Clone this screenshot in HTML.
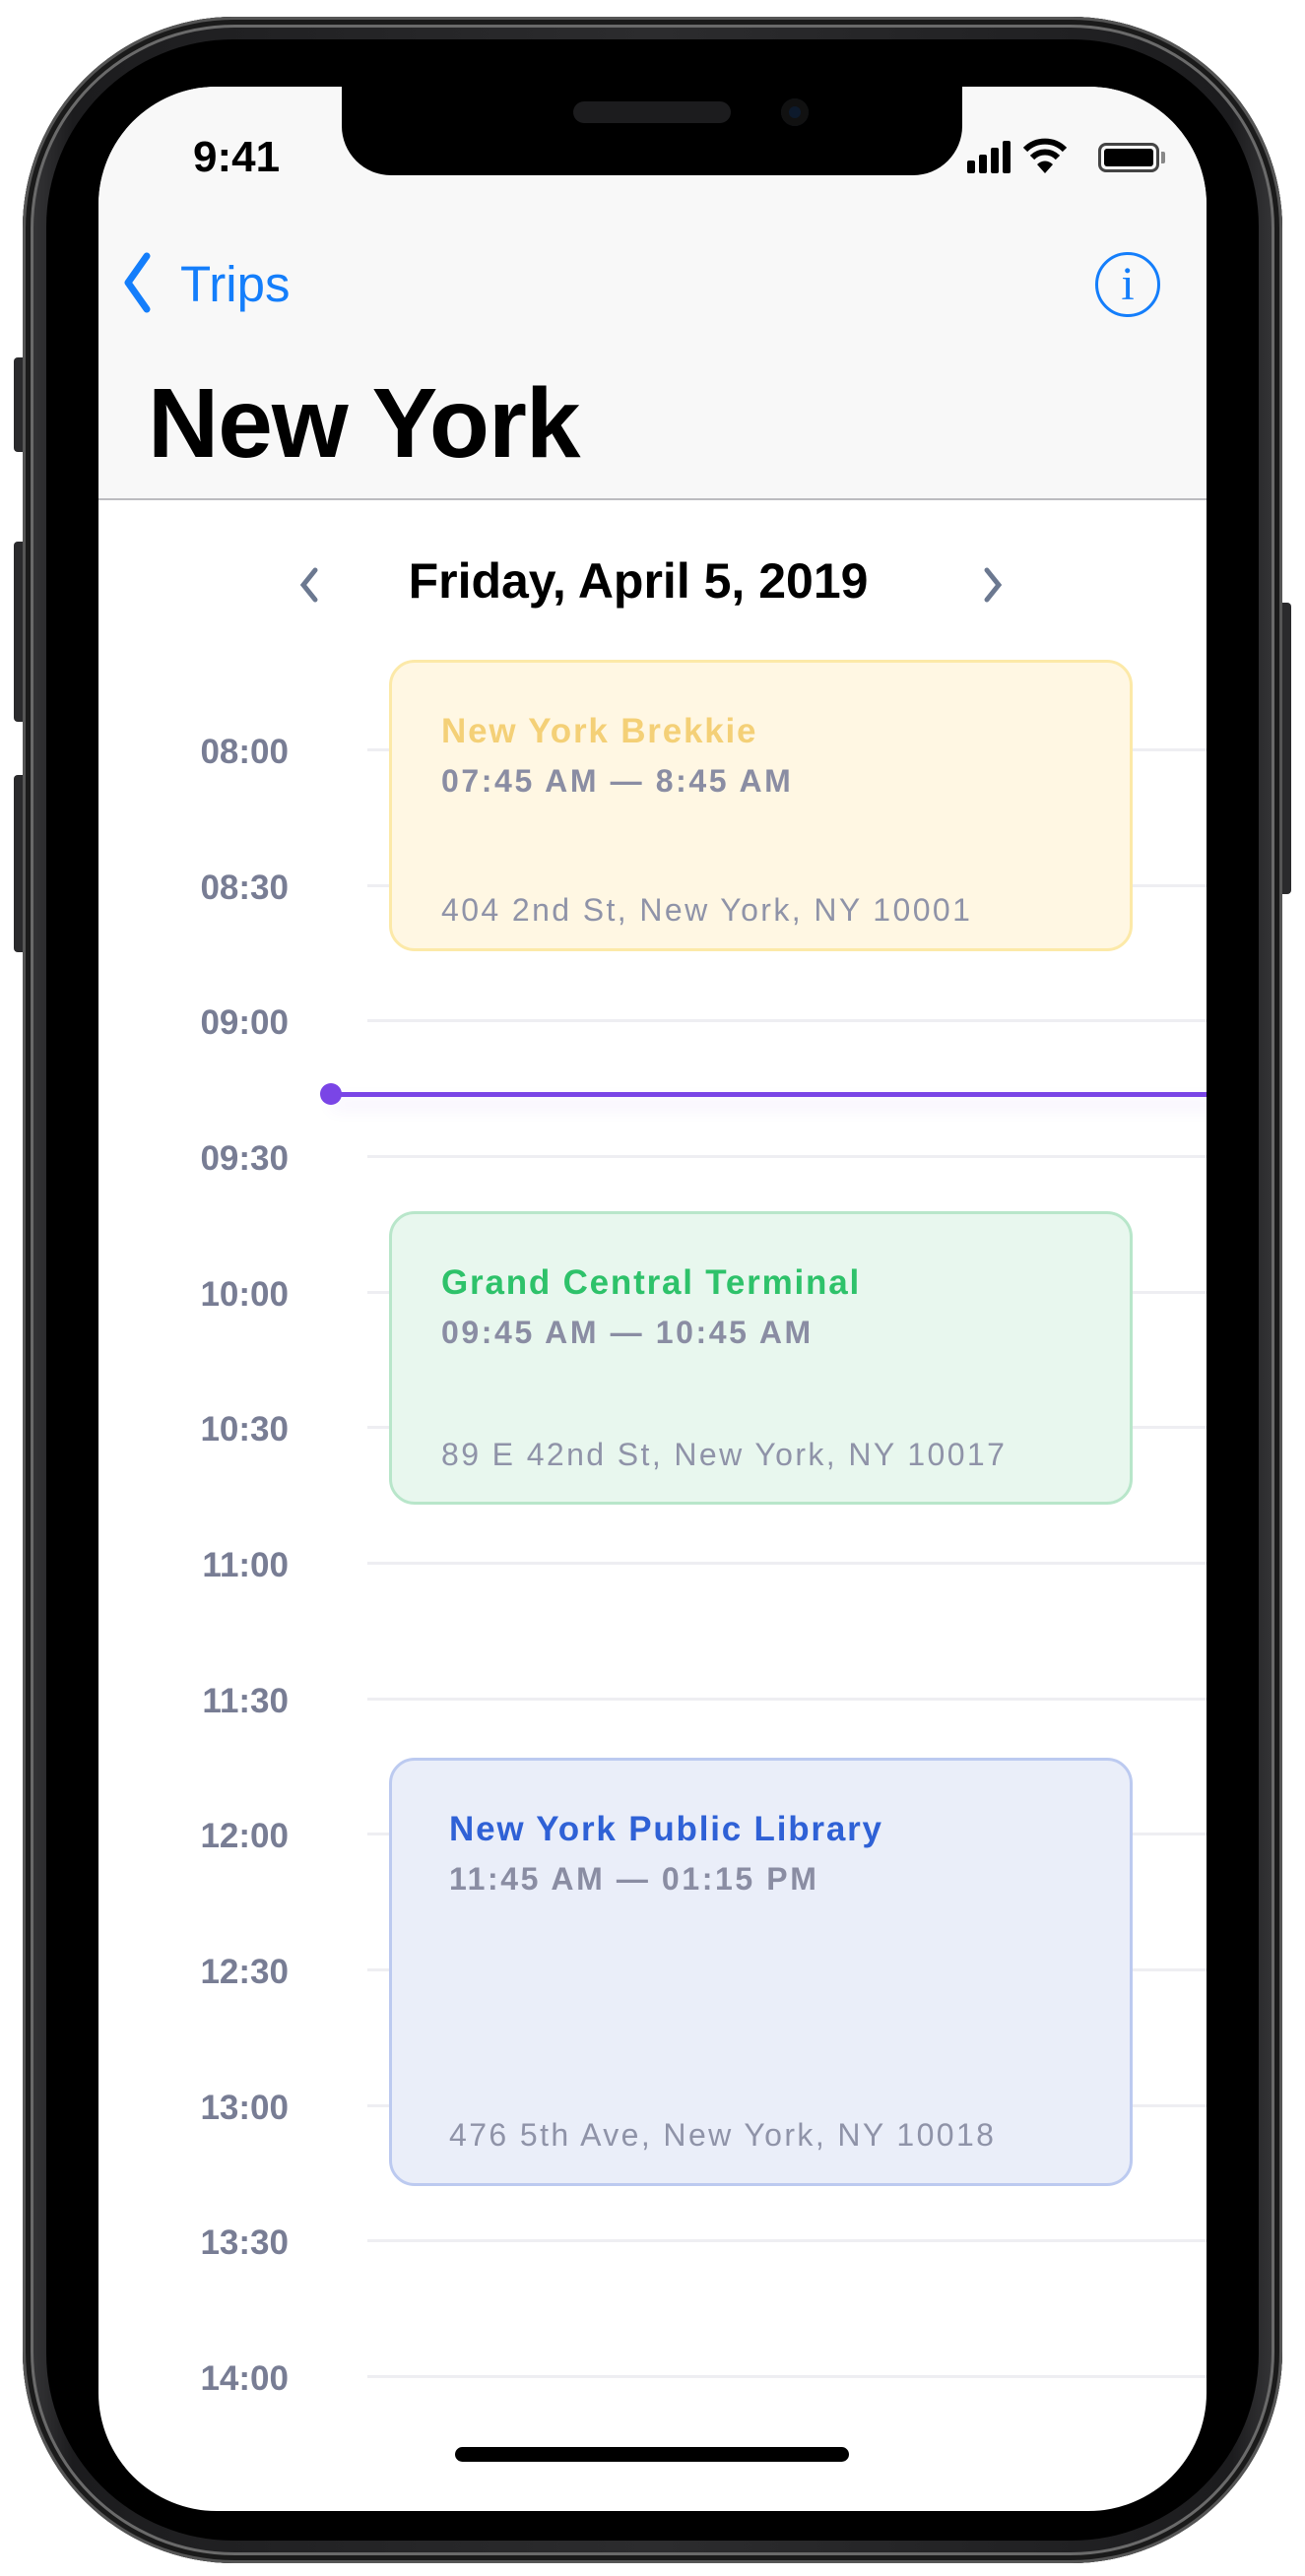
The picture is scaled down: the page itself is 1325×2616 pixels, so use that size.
<!DOCTYPE html>
<html><head><meta charset="utf-8">
<style>
*{margin:0;padding:0;box-sizing:border-box}
body{width:1325px;height:2616px;background:#fff;position:relative;overflow:hidden;font-family:"Liberation Sans",sans-serif}
.abs{position:absolute}
.body{left:23px;top:17px;width:1279px;height:2586px;border-radius:215px;background:linear-gradient(90deg,#3a3a3c,#1c1c1e 4%,#2c2c2e 50%,#1c1c1e 96%,#3a3a3c);box-shadow:inset 0 0 0 3px #555,inset 0 0 0 8px #1a1a1a,inset 0 0 0 11px #6a6a6a}
.bezel{left:47px;top:40px;width:1231px;height:2540px;border-radius:190px;background:#000}
.screen{left:100px;top:88px;width:1125px;height:2462px;border-radius:120px;background:#fff;overflow:hidden}
.btn{background:#2a2a2c;border-radius:4px}
.nav{left:0;top:0;width:1125px;height:420px;background:#f8f8f8;border-bottom:2px solid #bcbcc0}
.notch{left:247px;top:-2px;width:630px;height:92px;background:#000;border-radius:0 0 50px 50px}
.lbl{position:absolute;width:200px;text-align:right;font-weight:bold;font-size:35px;color:#787d94}
.grid{position:absolute;left:273px;right:0;height:3px;background:#eeeef2}
.card{position:absolute;left:295px;width:755px;border-radius:26px;border:3px solid}
.t{position:absolute;left:50px;font-weight:bold;font-size:35px;letter-spacing:1.8px;white-space:nowrap}
.tm{position:absolute;left:50px;font-weight:bold;font-size:32px;letter-spacing:2.6px;color:#8a8da3;white-space:nowrap}
.ad{position:absolute;left:50px;font-size:32px;letter-spacing:2.4px;color:#8f93a8;white-space:nowrap}
</style></head><body>
<div class="abs btn" style="left:14px;top:363px;width:14px;height:96px"></div>
<div class="abs btn" style="left:14px;top:550px;width:14px;height:183px"></div>
<div class="abs btn" style="left:14px;top:787px;width:14px;height:180px"></div>
<div class="abs btn" style="left:1297px;top:612px;width:14px;height:296px"></div>
<div class="abs body"></div>
<div class="abs bezel"></div>
<div class="abs screen">
  <div class="abs nav"></div>
  <div class="abs notch">
    <div class="abs" style="left:235px;top:17px;width:160px;height:22px;border-radius:11px;background:#1c1c1e"></div>
    <div class="abs" style="left:446px;top:14px;width:28px;height:28px;border-radius:50%;background:#0d1a2c;box-shadow:inset 0 0 0 8px #111"></div>
  </div>
  <div class="abs" style="left:96px;top:50px;font-size:44px;font-weight:bold;line-height:1">9:41</div>
  <div class="abs" style="left:882px;top:75px;width:8px;height:13px;background:#000;border-radius:2px"></div>
  <div class="abs" style="left:894px;top:69px;width:8px;height:19px;background:#000;border-radius:2px"></div>
  <div class="abs" style="left:906px;top:62px;width:8px;height:26px;background:#000;border-radius:2px"></div>
  <div class="abs" style="left:918px;top:55px;width:8px;height:33px;background:#000;border-radius:2px"></div>
  <svg class="abs" style="left:938px;top:52px" width="46" height="38" viewBox="0 0 46 38"><path d="M3 12 A28 28 0 0 1 43 12" stroke="#000" stroke-width="6" fill="none"/><path d="M10 20 A18 18 0 0 1 36 20" stroke="#000" stroke-width="6" fill="none"/><path d="M23 36 L15 27 A11 11 0 0 1 31 27 Z" fill="#000"/></svg>
  <div class="abs" style="left:1015px;top:57px;width:62px;height:30px;border:3px solid #444;border-radius:8px;padding:3px"><div style="width:100%;height:100%;background:#000;border-radius:3px"></div></div>
  <div class="abs" style="left:1079px;top:66px;width:4px;height:12px;background:#888;border-radius:0 2px 2px 0"></div>
  <svg class="abs" style="left:24px;top:168px" width="30" height="62" viewBox="0 0 30 62"><path d="M25 4 L6 31 L25 58" stroke="#147efb" stroke-width="7" fill="none" stroke-linecap="round" stroke-linejoin="round"/></svg>
  <div class="abs" style="left:83px;top:170px;font-size:51px;color:#147efb;line-height:1.2">Trips</div>
  <div class="abs" style="left:1012px;top:168px;width:66px;height:66px;border:3px solid #147efb;border-radius:50%;text-align:center;font-family:'Liberation Serif',serif;font-size:48px;line-height:60px;color:#147efb">i</div>
  <div class="abs" style="left:50px;top:282px;font-size:100px;font-weight:bold;letter-spacing:-1px;line-height:1.2">New York</div>
  <svg class="abs" style="left:200px;top:486px" width="26" height="40" viewBox="0 0 26 40"><path d="M20 5 L8 20 L20 35" stroke="#6b7890" stroke-width="5" fill="none" stroke-linecap="round"/></svg>
  <svg class="abs" style="left:896px;top:486px" width="26" height="40" viewBox="0 0 26 40"><path d="M6 5 L18 20 L6 35" stroke="#6b7890" stroke-width="5" fill="none" stroke-linecap="round"/></svg>
  <div class="abs" style="left:298px;top:470px;width:500px;text-align:center;font-size:50px;font-weight:bold;white-space:nowrap;line-height:1.3">Friday, April 5, 2019</div>
  <div class="grid" style="top:672px"></div><div class="lbl" style="left:-7px;top:656px">08:00</div>
  <div class="grid" style="top:810px"></div><div class="lbl" style="left:-7px;top:794px">08:30</div>
  <div class="grid" style="top:947px"></div><div class="lbl" style="left:-7px;top:931px">09:00</div>
  <div class="grid" style="top:1085px"></div><div class="lbl" style="left:-7px;top:1069px">09:30</div>
  <div class="grid" style="top:1223px"></div><div class="lbl" style="left:-7px;top:1207px">10:00</div>
  <div class="grid" style="top:1360px"></div><div class="lbl" style="left:-7px;top:1344px">10:30</div>
  <div class="grid" style="top:1498px"></div><div class="lbl" style="left:-7px;top:1482px">11:00</div>
  <div class="grid" style="top:1636px"></div><div class="lbl" style="left:-7px;top:1620px">11:30</div>
  <div class="grid" style="top:1773px"></div><div class="lbl" style="left:-7px;top:1757px">12:00</div>
  <div class="grid" style="top:1911px"></div><div class="lbl" style="left:-7px;top:1895px">12:30</div>
  <div class="grid" style="top:2049px"></div><div class="lbl" style="left:-7px;top:2033px">13:00</div>
  <div class="grid" style="top:2186px"></div><div class="lbl" style="left:-7px;top:2170px">13:30</div>
  <div class="grid" style="top:2324px"></div><div class="lbl" style="left:-7px;top:2308px">14:00</div>
  <div class="abs" style="left:237px;top:1021px;width:900px;height:5px;background:#7a45e6;box-shadow:0 10px 16px rgba(122,69,230,.15)"></div>
  <div class="abs" style="left:225px;top:1012px;width:22px;height:22px;border-radius:50%;background:#7a45e6"></div>
  <div class="card" style="top:582px;height:296px;background:#fff7e3;border-color:#fce9a8">
    <div class="t" style="top:50px;color:#f4d077">New York Brekkie</div>
    <div class="tm" style="top:102px">07:45 AM — 8:45 AM</div>
    <div class="ad" style="top:233px">404 2nd St, New York, NY 10001</div>
  </div>
  <div class="card" style="top:1142px;height:298px;background:#e8f7ee;border-color:#b8e6ca">
    <div class="t" style="top:50px;color:#2ec26a">Grand Central Terminal</div>
    <div class="tm" style="top:102px">09:45 AM — 10:45 AM</div>
    <div class="ad" style="top:226px">89 E 42nd St, New York, NY 10017</div>
  </div>
  <div class="card" style="top:1697px;height:435px;background:#eaeef9;border-color:#bccaf0">
    <div class="t" style="top:50px;left:58px;color:#2f61d6">New York Public Library</div>
    <div class="tm" style="top:102px;left:58px">11:45 AM — 01:15 PM</div>
    <div class="ad" style="top:362px;left:58px">476 5th Ave, New York, NY 10018</div>
  </div>
  <div class="abs" style="left:362px;top:2397px;width:400px;height:15px;border-radius:8px;background:#000"></div>
</div>
</body></html>
